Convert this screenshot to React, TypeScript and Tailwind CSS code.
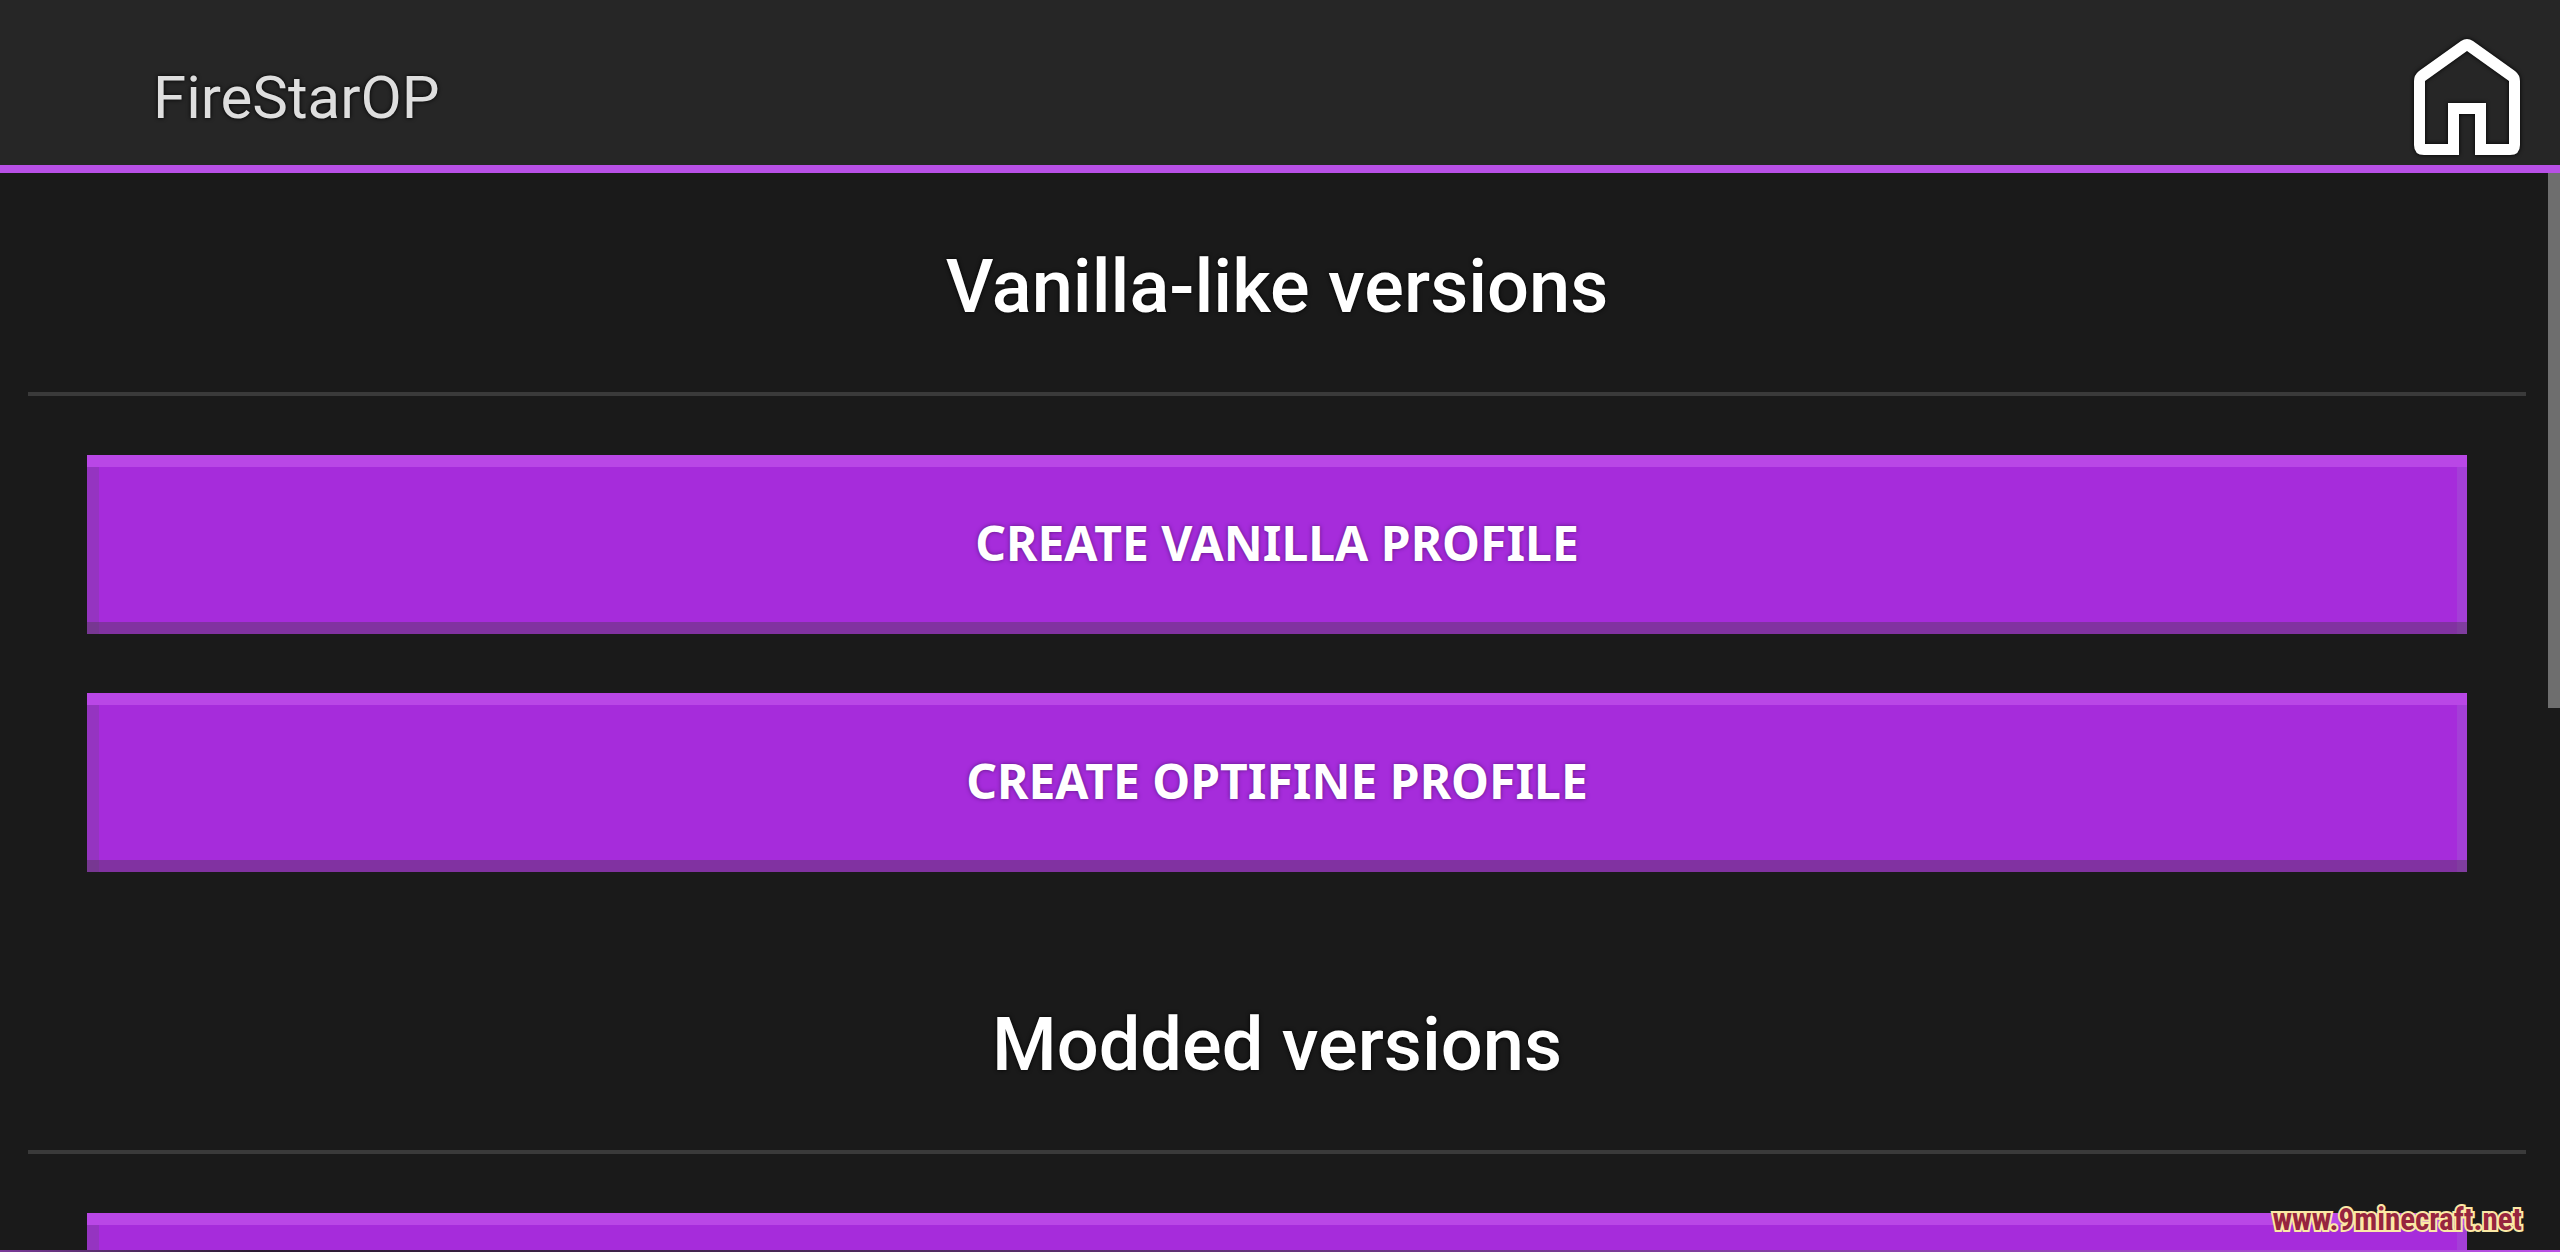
const sections = [
  {
    title: "Vanilla-like versions",
    actions: [
      { name: "Create vanilla profile", text: "Create vanilla profile" },
      { name: "Create OptiFine profile", text: "Create OptiFine profile" },
    ],
  },
  {
    title: "Modded versions",
    actions: [{ name: "Create modded profile", text: "" }],
  },
];

function HomeIcon() {
  return (
    <svg
      viewBox="0 0 106 116"
      className="h-[116px] w-[106px] overflow-visible drop-shadow-[0_0_2px_#000]"
      fill="#fff"
      fillRule="evenodd"
      aria-hidden="true"
    >
      <path d="M45 116H10Q0 116 0 106V42Q0 36 5 32L47 2Q53 -2 59 2L101 32Q106 36 106 42V106Q106 116 96 116H61V75H45ZM11 105V42L53 12L95 42V105H72V64H34V105Z" />
    </svg>
  );
}

function Header() {
  return (
    <header className="flex h-[173px] shrink-0 items-center justify-between border-b-8 border-[#b850e6] bg-[#262626] pr-10 pl-[153px]">
      <span className="pt-[30px] text-[60px] leading-[72px] text-[#dedede] [text-shadow:0_0_4px_#000]">
        FireStarOP
      </span>
      <button type="button" aria-label="Home" className="pt-[29px]">
        <HomeIcon />
      </button>
    </header>
  );
}

function ActionButton({ name, text }: { name: string; text: string }) {
  return (
    <button
      type="button"
      aria-label={name}
      className="h-[179px] w-full shrink-0 bg-[#a62cdb] pb-1 font-['Noto_Sans',sans-serif] text-[48px] font-bold text-white uppercase shadow-[inset_0_12px_0_#b947e6,inset_0_-12px_0_rgba(74,60,74,0.4),inset_12px_0_0_rgba(90,80,100,0.22),inset_-10px_0_0_rgba(160,140,200,0.2)] [text-shadow:0_0_4px_#5b1780]"
    >
      {text}
    </button>
  );
}

export default function App() {
  return (
    <div className="relative flex h-screen flex-col overflow-hidden bg-[#1a1a1a] font-[Roboto,sans-serif]">
      <Header />
      <main className="flex min-h-0 flex-1 items-start overflow-hidden">
        <div className="flex-1 pr-[22px] pl-7">
          {sections.map((section) => (
            <section key={section.title} className="pb-[59px]">
              <h2 className="border-b-4 border-[#3a3a3a] pt-[69px] pb-[60px] text-center text-[74px] leading-[90px] font-medium text-white [text-shadow:0_0_4px_#000]">
                {section.title}
              </h2>
              <div className="flex flex-col gap-[59px] px-[59px] pt-[59px]">
                {section.actions.map((action) => (
                  <ActionButton key={action.name} {...action} />
                ))}
              </div>
            </section>
          ))}
        </div>
        <div className="h-[535px] w-3 shrink-0 bg-[#6e6e6e]" />
      </main>
      <div className="h-0.5 shrink-0 bg-linear-to-r from-[#7a3a99] via-[#2a1a30] via-10% to-[#b850e6]" />
      <a
        href="#"
        className="absolute right-[38px] bottom-[12px] font-['Roboto_Condensed',sans-serif] text-[31px] leading-[40px] font-bold text-[#96253f] [-webkit-text-stroke:4px_#fbe9a6] [paint-order:stroke_fill]"
      >
        www.9minecraft.net
      </a>
    </div>
  );
}
